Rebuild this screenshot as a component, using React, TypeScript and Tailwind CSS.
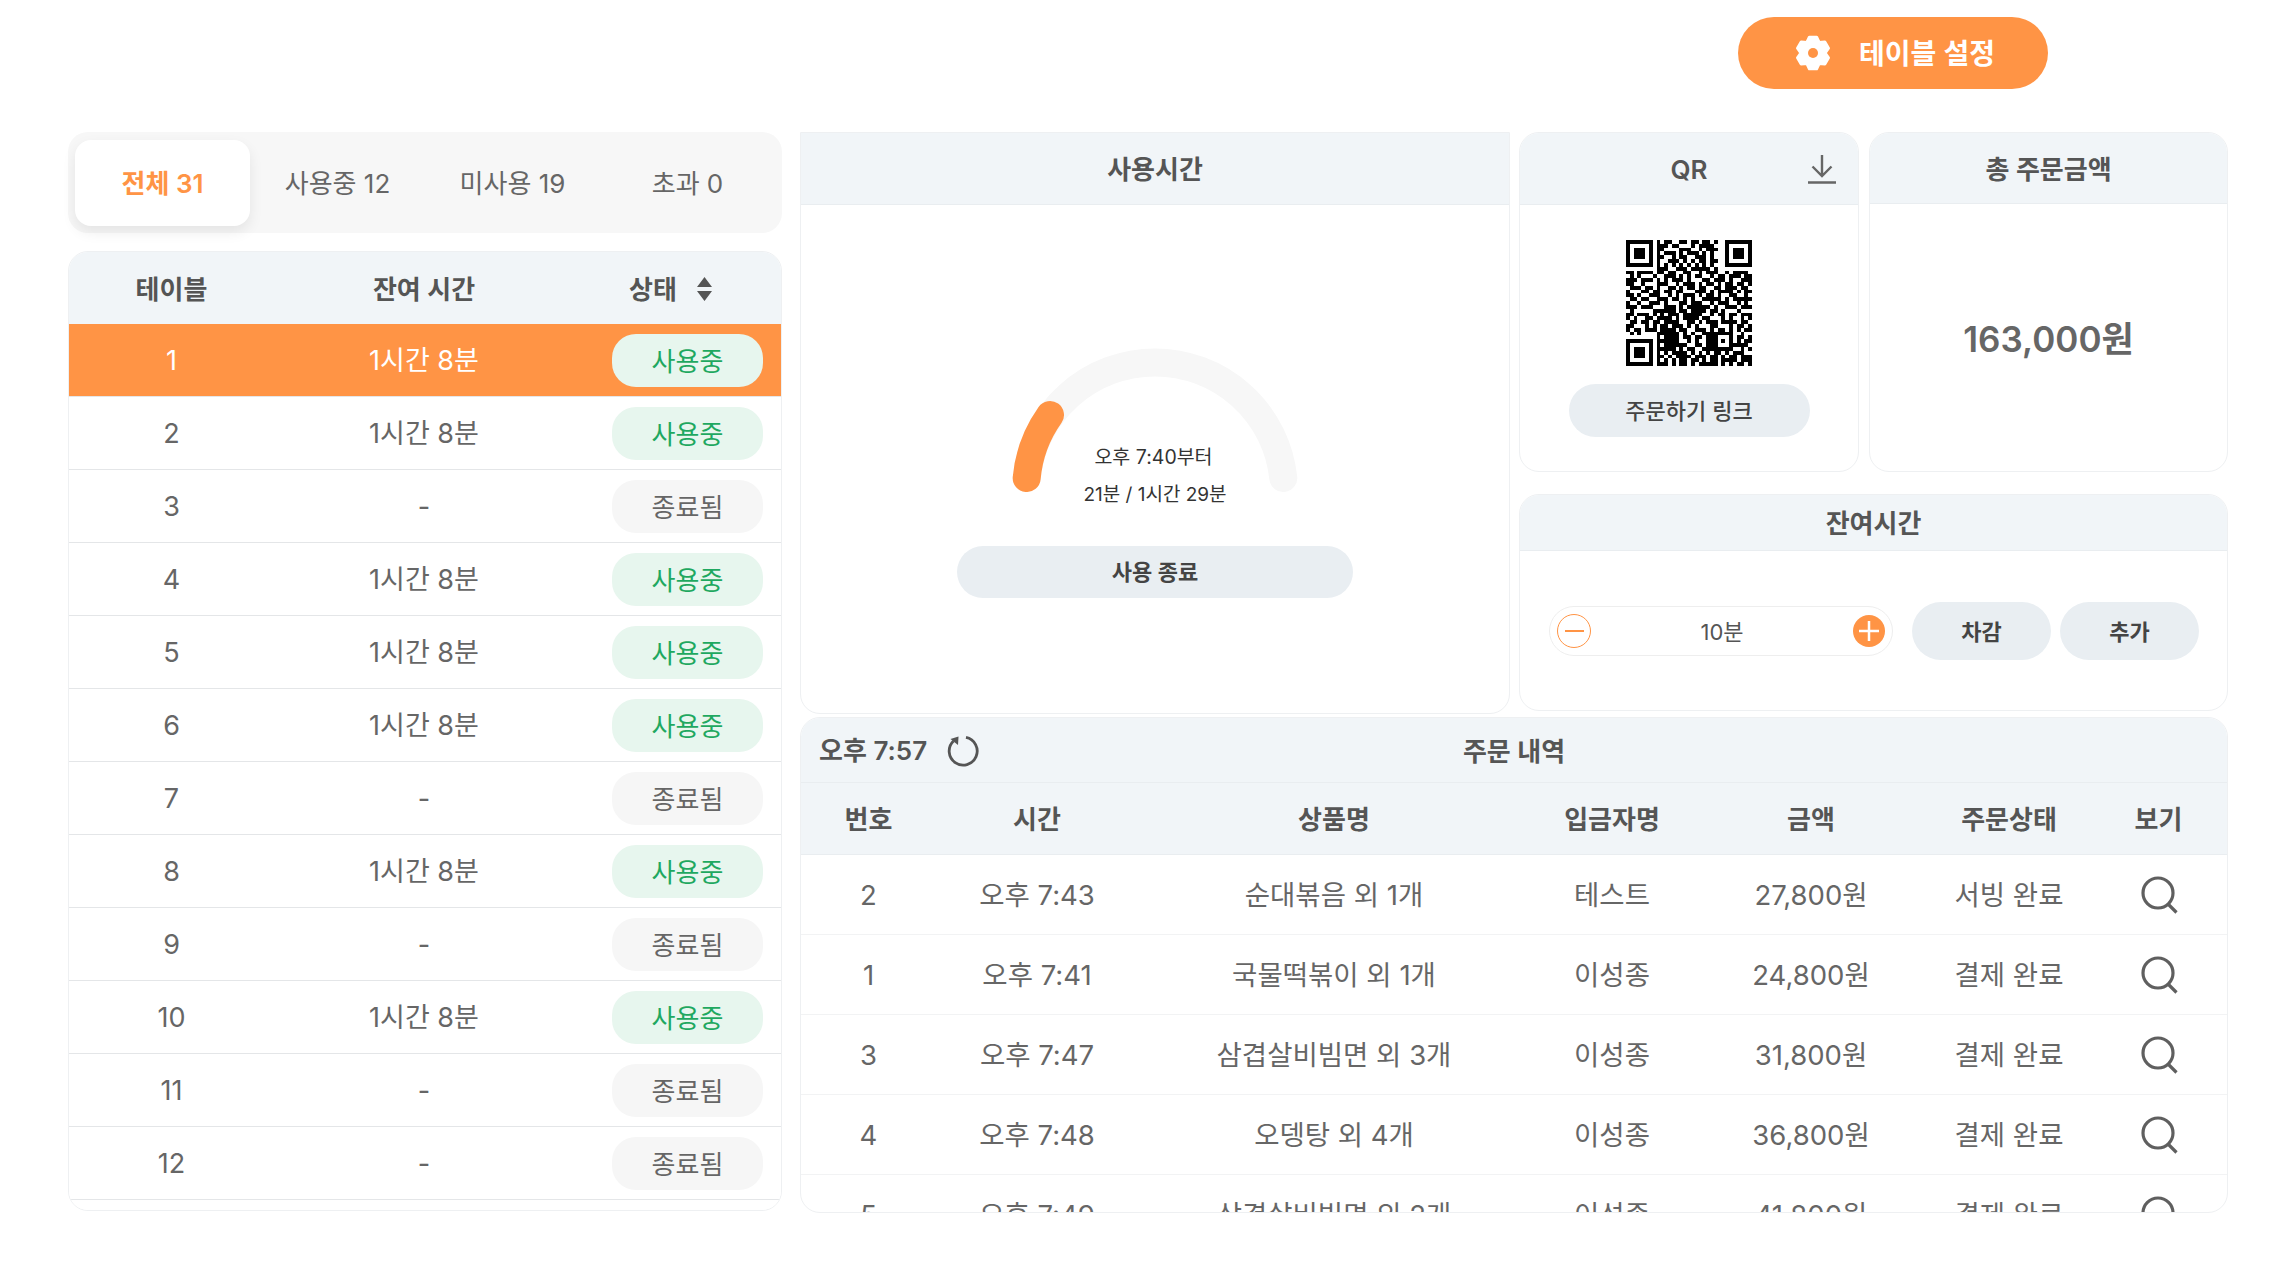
import { Fragment } from 'react';

const tables = [
  { no: 1, left: '1시간 8분', active: true },
  { no: 2, left: '1시간 8분', active: true },
  { no: 3, left: '-', active: false },
  { no: 4, left: '1시간 8분', active: true },
  { no: 5, left: '1시간 8분', active: true },
  { no: 6, left: '1시간 8분', active: true },
  { no: 7, left: '-', active: false },
  { no: 8, left: '1시간 8분', active: true },
  { no: 9, left: '-', active: false },
  { no: 10, left: '1시간 8분', active: true },
  { no: 11, left: '-', active: false },
  { no: 12, left: '-', active: false },
  { no: 13, left: '-', active: false },
];

const orders = [
  ['2', '오후 7:43', '순대볶음 외 1개', '테스트', '27,800원', '서빙 완료'],
  ['1', '오후 7:41', '국물떡볶이 외 1개', '이성종', '24,800원', '결제 완료'],
  ['3', '오후 7:47', '삼겹살비빔면 외 3개', '이성종', '31,800원', '결제 완료'],
  ['4', '오후 7:48', '오뎅탕 외 4개', '이성종', '36,800원', '결제 완료'],
  ['5', '오후 7:49', '삼겹살비빔면 외 2개', '이성종', '41,800원', '결제 완료'],
];

const qrRows = [
  '........X.XX..XX.XX.XX.X.........',
  '........XXX.XX...X.XXXX..........',
  '........XX....XXX..X.XXX.........',
  '........X.XXX.X.XXX.X.X..........',
  '........XX..X.XX..XXX.X..........',
  '........X..XXX.X.X.XX.XX.........',
  '........X.X.X.X.X.X.X.X..........',
  '........XXX..XXX.XXXXX.X.........',
  'XX.XXXX.XX.XX..XX..X.XXX..X.XXXX.',
  '.X.X...X..XXX.X.X.XX..X.XX.XXX.XX',
  'XXX.XXX.X.X.XXX.X...XX.XXX.X..XXX',
  'XX..X...XXX..X.XXX.X.XX.X.XX.XX.X',
  '.XXX.XX.X..XX.X.XX.XX..XX.XXX.XX.',
  'X...XX.XX.XX.XX...XXX.X.XXXX.X.XX',
  'XX.X..XXX..X.X.XXX.X.XX.X..XX..X.',
  '.XX.XX..XXX.XX.X.X..XXXXX.X.XXXXX',
  'X..X..XXX.X...XX.XXX..X.XXX..X.X.',
  'XXX.XXX...XXX.X.XXXXXX.X..XXX.XXX',
  '.X.....XXXXXX.XX.XXXX.XX.X...X...',
  'XX.XXX.X.X.XXX.XXXXX..X.XX.XX.XXX',
  'X.X..XX.XXXX.X.XXXX.XX...X.X..X.X',
  '.XX.XX.XX.XXXX..XX.X.XXX.XXXX.XX.',
  'XX...X.X.XX.XXX.X.X...XX...X.XX.X',
  'X.XX.XXX.XXXX.XX..XXX.X.XX.X.X.XX',
  '.X.X....XXXXXX.X.X..XXXXXXXX..X..',
  '........X.XXXX.XX.XX.XXX...X.XX.X',
  '........XXXXXX..X.X..XXX.X.X.X.XX',
  '........X.XXXXXX..XX.XXX...XXXXX.',
  '........XXXXX.X.XX..XXXXXXXX..X.X',
  '........X.X.XXXX.X.X.X.XX.X.XXX..',
  '........XX.X.XXXX.XXX.XX.X.XX.XXX',
  '........X.X.X.XX.XX.X.XX.XXXX.XXX',
  '........XXX.X.XX.X.XXXXX.X.X.XX.X',
];

function Qr() {
  const n = 33;
  const cells: string[] = [];
  qrRows.forEach((row, y) => {
    row.split('').forEach((c, x) => {
      if (c === 'X') cells.push(`M${x} ${y}h1v1h-1z`);
    });
  });
  const finder = (x: number, y: number) =>
    `M${x} ${y}h7v7h-7zM${x + 1} ${y + 1}v5h5v-5zM${x + 2} ${y + 2}h3v3h-3z`;
  return (
    <svg width="126" height="126" viewBox={`0 0 ${n} ${n}`} shapeRendering="crispEdges">
      <path d={cells.join('')} fill="#000" />
      <path d={finder(0, 0) + finder(26, 0) + finder(0, 26)} fill="#000" fillRule="evenodd" />
    </svg>
  );
}

function Gear() {
  const pts: string[] = [];
  for (let i = 0; i < 6; i++) {
    const base = -90 + i * 60;
    [[-30, 12.2], [-13, 16.2], [13, 16.2]].forEach(([a, r]) => {
      const t = ((base + a) * Math.PI) / 180;
      pts.push(`${(18 + r * Math.cos(t)).toFixed(2)},${(18 + r * Math.sin(t)).toFixed(2)}`);
    });
  }
  return (
    <svg width="36" height="36" viewBox="0 0 36 36">
      <polygon points={pts.join(' ')} fill="#fff" stroke="#fff" strokeWidth="3" strokeLinejoin="round" />
      <circle cx="18" cy="18" r="5" fill="#ff9445" />
    </svg>
  );
}

function SearchIcon() {
  return (
    <svg width="38" height="38" viewBox="0 0 38 38" fill="none" stroke="#5f5f5f" strokeWidth="3.2">
      <circle cx="17" cy="17" r="15" />
      <path d="M27 28l8.5 8.5" />
    </svg>
  );
}

function PanelHead({ title, className }: { title: string; className: string }) {
  return (
    <div className={`flex items-center justify-center bg-[#f1f5f8] border-b border-[#e9edf0] pt-[2px] text-[26px] font-semibold text-[#555] ${className}`}>
      {title}
    </div>
  );
}

export default function App() {
  return (
    <div className="h-[1264px] w-full overflow-hidden bg-white font-['Inter','Noto_Sans_CJK_KR',sans-serif]">
      <div className="flex justify-end pt-[17px] pr-[246px]">
        <button className="flex h-[72px] w-[310px] items-center justify-center gap-[28px] rounded-full bg-[#ff9445] pl-[4px] text-[28px] font-semibold text-white">
          <Gear />
          <span className="pt-[2px]">테이블 설정</span>
        </button>
      </div>

      <div className="mt-[43px] flex gap-[18px] pl-[68px]">
        <div className="flex w-[714px] flex-col gap-[18px]">
          <div className="flex h-[101px] items-center rounded-[20px] bg-[#f7f7f7] px-[7px]">
            <div className="flex h-[86px] w-[175px] items-center justify-center rounded-[16px] bg-white pt-[2px] text-[26px] font-semibold text-[#ff9445] shadow-[0_6px_14px_rgba(0,0,0,0.08)]">
              전체 31
            </div>
            <div className="flex h-[86px] w-[175px] items-center justify-center pt-[2px] text-[26px] text-[#666]">사용중 12</div>
            <div className="flex h-[86px] w-[175px] items-center justify-center pt-[2px] text-[26px] text-[#666]">미사용 19</div>
            <div className="flex h-[86px] w-[175px] items-center justify-center pt-[2px] text-[26px] text-[#666]">초과 0</div>
          </div>

          <div className="h-[960px] overflow-hidden rounded-[20px] border border-[#eef0f2]">
            <div className="grid h-[72px] grid-cols-[205px_300px_1fr] items-center bg-[#f1f5f8] pt-[2px] text-[26px] font-semibold text-[#555]">
              <div className="text-center">테이블</div>
              <div className="text-center">잔여 시간</div>
              <div className="flex items-center gap-[20px] pl-[55px]">
                상태
                <svg width="15" height="24" viewBox="0 0 15 24" fill="#555">
                  <path d="M7.5 0L15 10H0zM0 14h15l-7.5 10z" />
                </svg>
              </div>
            </div>
            {tables.map((t) => (
              <div
                key={t.no}
                className={`grid h-[73px] grid-cols-[205px_300px_1fr] items-center border-b border-[#e4e6e8] text-[27px] ${t.no === 1 ? 'bg-[#ff9445] text-white' : 'bg-white text-[#666]'}`}
              >
                <div className="pt-[2px] text-center">{t.no}</div>
                <div className="pt-[2px] text-center">{t.left}</div>
                <div className="flex justify-end pr-[18px]">
                  <div className={`flex h-[53px] w-[151px] items-center justify-center rounded-[24px] pt-[2px] text-[26px] ${t.active ? 'bg-[#e7f6ee] text-[#1fa860]' : 'bg-[#f6f6f6] text-[#666]'}`}>
                    {t.active ? '사용중' : '종료됨'}
                  </div>
                </div>
              </div>
            ))}
          </div>
        </div>

        <div className="flex w-[1428px] flex-col gap-[3px]">
          <div className="flex h-[582px] gap-[9px]">
            <div className="h-full w-[710px] overflow-hidden rounded-b-[20px] border border-[#eef0f2]">
              <PanelHead title="사용시간" className="h-[72px]" />
              <div className="flex flex-col items-center pt-[143px]">
                <div className="relative h-[198px] w-[286px]">
                  <svg width="286" height="144" viewBox="0 0 286 144" fill="none" strokeWidth="28" strokeLinecap="round">
                    <path d="M14.7 130A129 129 0 0 1 271.3 130" stroke="#f7f7f7" />
                    <path d="M14.7 130A129 129 0 0 1 38 67" stroke="#ff9445" />
                  </svg>
                  <div className="absolute inset-x-0 top-[90px] flex flex-col items-center text-[19px] leading-[38px] text-[#333]">
                    <span className="pr-[3px] text-[19.5px]">오후 7:40부터</span>
                    <span>21분 / 1시간 29분</span>
                  </div>
                </div>
                <button className="h-[52px] w-[396px] rounded-full bg-[#e9eef2] pt-[1px] text-[22px] font-semibold text-[#444]">
                  사용 종료
                </button>
              </div>
            </div>

            <div className="flex w-[709px] flex-col gap-[22px]">
              <div className="flex h-[340px] gap-[10px]">
                <div className="w-[340px] overflow-hidden rounded-[20px] border border-[#eef0f2]">
                  <div className="relative">
                    <PanelHead title="QR" className="h-[72px]" />
                    <svg className="absolute right-[22px] top-[21px]" width="28" height="30" viewBox="0 0 28 30" fill="none" stroke="#666" strokeWidth="2.4">
                      <path d="M14 1v21M4.5 12.5L14 22l9.5-9.5M0 28.5h28" />
                    </svg>
                  </div>
                  <div className="flex flex-col items-center pt-[35px]">
                    <Qr />
                    <button className="mt-[18px] h-[53px] w-[241px] rounded-full bg-[#e9eef2] pt-[2px] text-[22px] font-medium text-[#444]">
                      주문하기 링크
                    </button>
                  </div>
                </div>
                <div className="flex w-[359px] flex-col overflow-hidden rounded-[20px] border border-[#eef0f2]">
                  <PanelHead title="총 주문금액" className="h-[72px]" />
                  <div className="flex h-[270px] items-center justify-center pt-[4px] text-[35px] font-semibold text-[#666]">163,000원</div>
                </div>
              </div>

              <div className="h-[217px] overflow-hidden rounded-[20px] border border-[#eef0f2]">
                <PanelHead title="잔여시간" className="h-[56px]" />
                <div className="flex items-center gap-[19px] pl-[29px] pt-[51px]">
                  <div className="flex h-[50px] w-[344px] items-center justify-between rounded-full border border-[#eee] pl-[7px] pr-[7px] text-[22px] text-[#555]">
                    <span className="flex h-[34px] w-[34px] items-center justify-center rounded-full border-[1.5px] border-[#ff9445]">
                      <span className="h-[2.5px] w-[19px] bg-[#ff9445]" />
                    </span>
                    <span className="pt-[2px]">10분</span>
                    <span className="relative flex h-[32px] w-[32px] items-center justify-center rounded-full bg-[#ff9445]">
                      <svg width="20" height="20" viewBox="0 0 20 20" stroke="#fff" strokeWidth="2.5">
                        <path d="M0 10h20M10 0v20" />
                      </svg>
                    </span>
                  </div>
                  <div className="flex gap-[9px]">
                    <button className="h-[58px] w-[139px] rounded-full bg-[#e9eef2] pt-[2px] text-[22px] font-semibold text-[#444]">차감</button>
                    <button className="h-[58px] w-[139px] rounded-full bg-[#e9eef2] pt-[2px] text-[22px] font-semibold text-[#444]">추가</button>
                  </div>
                </div>
              </div>
            </div>
          </div>

          <div className="h-[496px] overflow-hidden rounded-[20px] border border-[#eef0f2]">
            <div className="relative flex h-[65px] items-center justify-center border-b border-[#e9edf0] bg-[#f1f5f8] pt-[3px] text-[26px] font-semibold text-[#555]">
              <div className="absolute left-[18px] top-0 flex h-full items-center gap-[20px] pt-[1px]">
                <span>오후 7:57</span>
                <svg width="32" height="32" viewBox="0 0 32 32" fill="none" stroke="#555" strokeWidth="2.8">
                  <path d="M19 2.4A14 14 0 1 1 6.5 6" />
                  <path d="M3.5 4L11.5 1.5L11 10Z" fill="#555" stroke="none" />
                </svg>
              </div>
              주문 내역
            </div>
            <div className="grid grid-cols-[135px_202px_392px_164px_234px_162px_1fr]">
              {['번호', '시간', '상품명', '입금자명', '금액', '주문상태', '보기'].map((h) => (
                <div key={h} className="flex h-[72px] items-center justify-center border-b border-[#e9edf0] bg-[#f1f5f8] pt-[2px] text-[26px] font-semibold text-[#555]">
                  {h}
                </div>
              ))}
              {orders.map((o) => (
                <Fragment key={o[0]}>
                  {o.map((c, i) => (
                    <div key={i} className="flex h-[80px] items-center justify-center border-b border-[#f2f3f4] pt-[2px] text-[27.5px] text-[#666]">
                      {c}
                    </div>
                  ))}
                  <div className="flex h-[80px] items-center justify-center border-b border-[#f2f3f4] pl-[2px] pt-[1px]">
                    <SearchIcon />
                  </div>
                </Fragment>
              ))}
            </div>
          </div>
        </div>
      </div>
    </div>
  );
}
